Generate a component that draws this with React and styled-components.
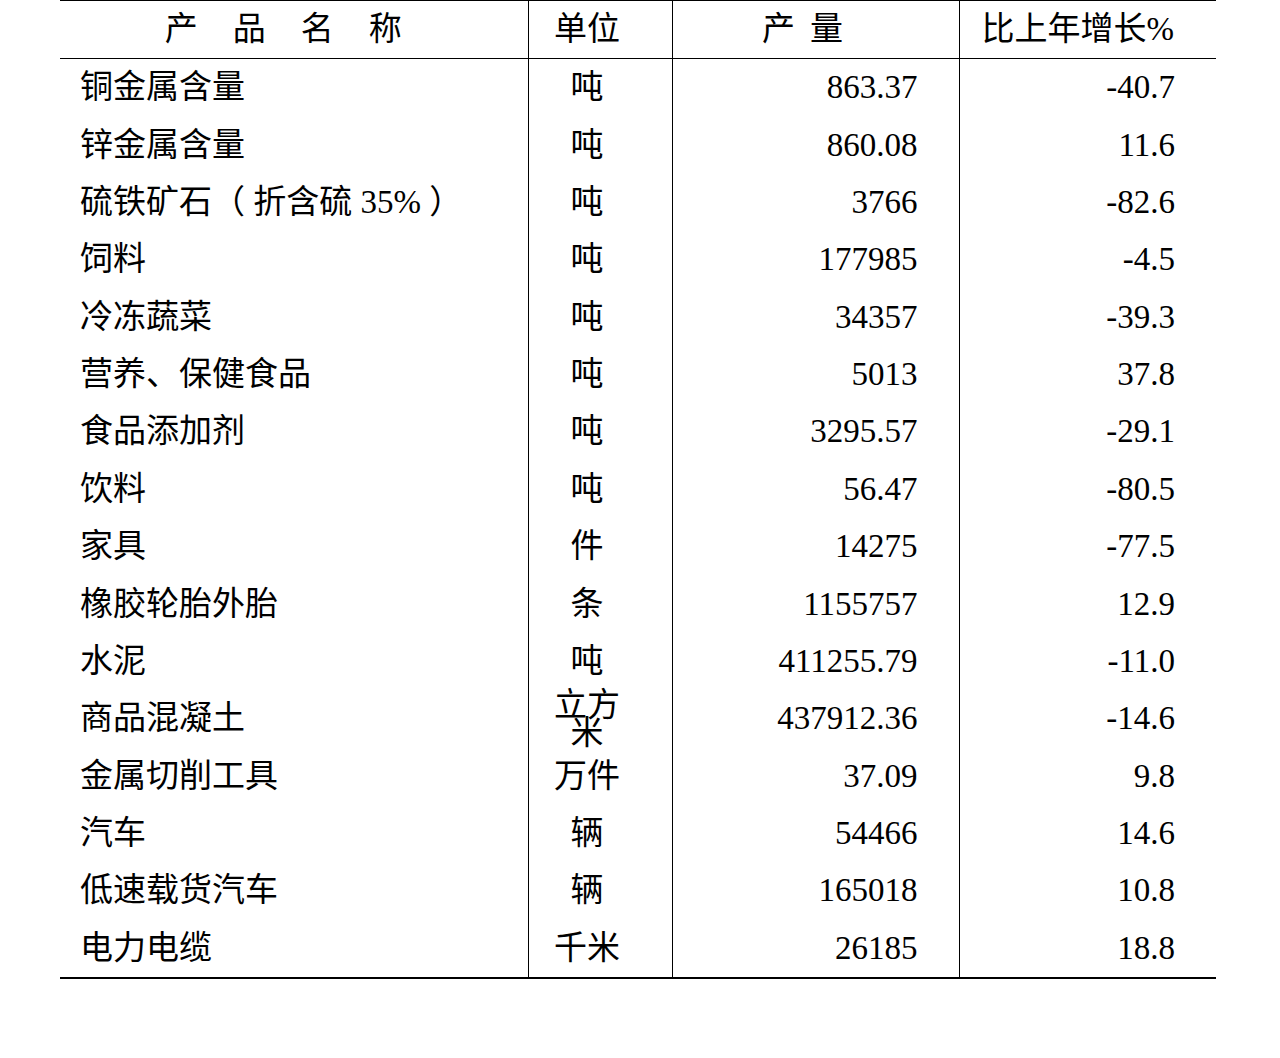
import React from "react";
import styled, { createGlobalStyle } from "styled-components";

const rows = [
  ["铜金属含量", "吨", "863.37", "-40.7"],
  ["锌金属含量", "吨", "860.08", "11.6"],
  ["硫铁矿石（ 折含硫 35% ）", "吨", "3766", "-82.6"],
  ["饲料", "吨", "177985", "-4.5"],
  ["冷冻蔬菜", "吨", "34357", "-39.3"],
  ["营养、保健食品", "吨", "5013", "37.8"],
  ["食品添加剂", "吨", "3295.57", "-29.1"],
  ["饮料", "吨", "56.47", "-80.5"],
  ["家具", "件", "14275", "-77.5"],
  ["橡胶轮胎外胎", "条", "1155757", "12.9"],
  ["水泥", "吨", "411255.79", "-11.0"],
  ["商品混凝土", "立方米", "437912.36", "-14.6"],
  ["金属切削工具", "万件", "37.09", "9.8"],
  ["汽车", "辆", "54466", "14.6"],
  ["低速载货汽车", "辆", "165018", "10.8"],
  ["电力电缆", "千米", "26185", "18.8"],
];

const Global = createGlobalStyle`
  body {
    margin: 0;
    background: #fff;
    color: #000;
    font-family: "Liberation Serif", "Noto Sans CJK SC", serif;
  }
`;

const Table = styled.table`
  margin-left: 60px;
  width: 1156px;
  table-layout: fixed;
  border-collapse: collapse;
  font-size: 33px;
  border-top: 1px solid #000;
  border-bottom: 2px solid #000;
`;

const Col = styled.col`
  width: ${(p) => p.$w}px;
`;

const Head = styled.th`
  height: 57px;
  padding: 0 ${(p) => p.$pr || 0}px 0 ${(p) => p.$pl || 0}px;
  font-weight: normal;
  text-align: center;
  border-bottom: 1px solid #000;
  border-left: ${(p) => (p.$first ? "none" : "1px solid #000")};
  letter-spacing: ${(p) => p.$spacing || 0}px;
  line-height: 1;
  white-space: nowrap;
`;

const Cell = styled.td`
  height: 57.375px;
  padding: 0 ${(p) => (p.$align === "right" ? "41px" : "20px")};
  text-align: ${(p) => p.$align || "left"};
  border-left: ${(p) => (p.$first ? "none" : "1px solid #000")};
  line-height: 1;
  white-space: nowrap;
`;

const Unit = styled.td`
  height: 57.375px;
  padding: 0 49px 0 23px;
  text-align: center;
  border-left: 1px solid #000;
  line-height: ${(p) => (p.$tight ? "28px" : "1")};
  word-break: break-all;
`;

export default function App() {
  return (
    <>
      <Global />
      <Table>
        <colgroup>
          <Col $w={468} />
          <Col $w={144} />
          <Col $w={287} />
          <Col $w={257} />
        </colgroup>
        <thead>
          <tr>
            <Head $first $spacing={35} $pl={14}>产品名称</Head>
            <Head $pl={23} $pr={49}>单位</Head>
            <Head $spacing={15} $pr={11}>产量</Head>
            <Head $pr={20}>比上年增长%</Head>
          </tr>
        </thead>
        <tbody>
          {rows.map(([name, unit, qty, growth]) => (
            <tr key={name}>
              <Cell $first>{name}</Cell>
              <Unit $tight={unit.length > 2}>{unit}</Unit>
              <Cell $align="right">{qty}</Cell>
              <Cell $align="right">{growth}</Cell>
            </tr>
          ))}
        </tbody>
      </Table>
    </>
  );
}
